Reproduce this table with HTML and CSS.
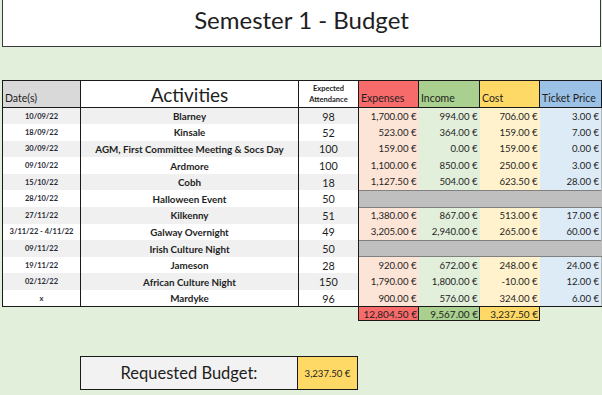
FILE: index.html
```html
<!DOCTYPE html>
<html lang="en">
<head>
<meta charset="utf-8">
<title>Semester 1 - Budget</title>
<link rel="stylesheet" href="styles.css">
</head>
<body>
<div class="title">Semester 1 - Budget</div>
<table class="budget">
  <colgroup>
    <col class="c-date"><col class="c-act"><col class="c-att"><col class="c-exp"><col class="c-inc"><col class="c-cost"><col class="c-tick">
  </colgroup>
  <thead>
    <tr class="head">
      <th class="h-date">Date(s)</th>
      <th class="h-act">Activities</th>
      <th class="h-att">Expected<br>Attendance</th>
      <th class="h-money h-exp">Expenses</th>
      <th class="h-money h-inc">Income</th>
      <th class="h-money h-cost">Cost</th>
      <th class="h-money h-tick">Ticket Price</th>
    </tr>
  </thead>
  <tbody>
    <tr class="odd"><td class="date">10/09/22</td><td class="act">Blarney</td><td class="att">98</td><td class="m exp">1,700.00 €</td><td class="m inc">994.00 €</td><td class="m cost">706.00 €</td><td class="m tick">3.00 €</td></tr>
    <tr><td class="date">18/09/22</td><td class="act">Kinsale</td><td class="att">52</td><td class="m exp">523.00 €</td><td class="m inc">364.00 €</td><td class="m cost">159.00 €</td><td class="m tick">7.00 €</td></tr>
    <tr class="odd"><td class="date">30/09/22</td><td class="act">AGM, First Committee Meeting &amp; Socs Day</td><td class="att">100</td><td class="m exp">159.00 €</td><td class="m inc">0.00 €</td><td class="m cost">159.00 €</td><td class="m tick">0.00 €</td></tr>
    <tr><td class="date">09/10/22</td><td class="act">Ardmore</td><td class="att">100</td><td class="m exp">1,100.00 €</td><td class="m inc">850.00 €</td><td class="m cost">250.00 €</td><td class="m tick">3.00 €</td></tr>
    <tr class="odd"><td class="date">15/10/22</td><td class="act">Cobh</td><td class="att">18</td><td class="m exp">1,127.50 €</td><td class="m inc">504.00 €</td><td class="m cost">623.50 €</td><td class="m tick">28.00 €</td></tr>
    <tr><td class="date">28/10/22</td><td class="act">Halloween Event</td><td class="att">50</td><td class="blank" colspan="4"></td></tr>
    <tr class="odd"><td class="date">27/11/22</td><td class="act">Kilkenny</td><td class="att">51</td><td class="m exp">1,380.00 €</td><td class="m inc">867.00 €</td><td class="m cost">513.00 €</td><td class="m tick">17.00 €</td></tr>
    <tr><td class="date">3/11/22 - 4/11/22</td><td class="act">Galway Overnight</td><td class="att">49</td><td class="m exp">3,205.00 €</td><td class="m inc">2,940.00 €</td><td class="m cost">265.00 €</td><td class="m tick">60.00 €</td></tr>
    <tr class="odd"><td class="date">09/11/22</td><td class="act">Irish Culture Night</td><td class="att">50</td><td class="blank" colspan="4"></td></tr>
    <tr><td class="date">19/11/22</td><td class="act">Jameson</td><td class="att">28</td><td class="m exp">920.00 €</td><td class="m inc">672.00 €</td><td class="m cost">248.00 €</td><td class="m tick">24.00 €</td></tr>
    <tr class="odd"><td class="date">02/12/22</td><td class="act">African Culture Night</td><td class="att">150</td><td class="m exp">1,790.00 €</td><td class="m inc">1,800.00 €</td><td class="m cost">-10.00 €</td><td class="m tick">12.00 €</td></tr>
    <tr class="last"><td class="date">x</td><td class="act">Mardyke</td><td class="att">96</td><td class="m exp">900.00 €</td><td class="m inc">576.00 €</td><td class="m cost">324.00 €</td><td class="m tick">6.00 €</td></tr>
  </tbody>
  <tfoot>
    <tr class="totals">
      <td class="empty"></td><td class="empty"></td><td class="empty"></td>
      <td class="t t-exp">12,804.50 €</td><td class="t t-inc">9,567.00 €</td><td class="t t-cost">3,237.50 €</td><td class="empty"></td>
    </tr>
  </tfoot>
</table>
<div class="request">
  <div class="req-label">Requested Budget:</div>
  <div class="req-value">3,237.50 €</div>
</div>
</body>
</html>
```
FILE: styles.css
```css
html, body {
  margin: 0;
  padding: 0;
}
body {
  background: #e2efda;
  font-family: Lato, "Open Sans", sans-serif;
  color: #1e1e1e;
  width: 602px;
  height: 395px;
  overflow: hidden;
}
.title {
  box-sizing: border-box;
  margin: 0 1px 0 2px;
  height: 47px;
  background: #fff;
  border: 1px solid #3a3a3a;
  border-top: none;
  font-size: 24px;
  text-align: center;
  line-height: 40px;
}
.budget {
  margin: 33px 0 0 2px;
  width: 599px;
  border-collapse: collapse;
  table-layout: fixed;
}
.c-date { width: 78px; }
.c-act { width: 218px; }
.c-att { width: 60px; }
.c-exp { width: 60px; }
.c-inc { width: 61px; }
.c-cost { width: 60px; }
.c-tick { width: 62px; }

.budget th, .budget td {
  padding: 0;
  overflow: hidden;
  white-space: nowrap;
}
.head th {
  height: 23px;
  border: 1px solid #1a1a1a;
  font-weight: normal;
}
.h-date {
  background: #d9d9d9;
  text-align: left;
  vertical-align: bottom;
  font-size: 10.5px;
  padding: 0 0 3px 2px !important;
}
.h-act {
  background: #fff;
  font-size: 19px;
  vertical-align: middle;
}
.h-att {
  background: #fff;
  font-size: 7.5px;
  font-weight: bold !important;
  line-height: 11px;
}
.h-money {
  text-align: left;
  vertical-align: bottom;
  font-size: 10.5px;
  padding: 0 0 3px 2px !important;
}
.h-exp { background: #f86b6b; }
.h-inc { background: #a9d08e; }
.h-cost { background: #ffd966; }
.h-tick { background: #9bc2e6; }

tbody tr {
  height: 16.6px;
}
tbody td {
  vertical-align: middle;
}
.date, .act, .att {
  background: #fff;
  text-align: center;
}
.odd .date, .odd .act, .odd .att {
  background: #f0f0f0;
}
.date {
  border-left: 1px solid #1a1a1a;
  border-right: 1px solid #1a1a1a;
  font-size: 7.5px;
  font-weight: bold;
  color: #2a2a35;
}
.act {
  border-right: 1px solid #1a1a1a;
  font-size: 9.8px;
  font-weight: bold;
}
.att {
  border-right: 1px solid #1a1a1a;
  font-size: 10.8px;
}
.m {
  text-align: right;
  font-size: 9.6px;
  padding-right: 2px !important;
}
.exp { background: #fce4d6; }
.inc { background: #e2efda; }
.cost { background: #fff2cc; }
.tick { background: #ddebf7; border-right: 1px solid #b4b4b4; }
.blank {
  background: #bfbfbf;
  border-top: 1px solid #808080;
  border-bottom: 1px solid #808080;
}
.last td {
  border-bottom: 1px solid #1a1a1a;
}
.totals td {
  height: 13px;
}
.empty {
  background: transparent;
}
.t {
  border: 1px solid #1a1a1a;
  text-align: right;
  font-size: 10px;
  padding-right: 1px !important;
}
.t-exp { background: #f86b6b; }
.t-inc { background: #a9d08e; }
.t-cost { background: #ffd966; }

.request {
  display: flex;
  margin: 35px 0 0 80px;
  width: 278px;
  height: 34px;
  box-sizing: border-box;
  border: 1px solid #1a1a1a;
}
.req-label {
  flex: 0 0 216px;
  background: #f2f2f2;
  border-right: 1px solid #1a1a1a;
  font-size: 16.5px;
  display: flex;
  align-items: center;
  justify-content: center;
}
.req-value {
  flex: 1;
  background: #ffd966;
  font-size: 9.6px;
  display: flex;
  align-items: center;
  justify-content: center;
}
```
